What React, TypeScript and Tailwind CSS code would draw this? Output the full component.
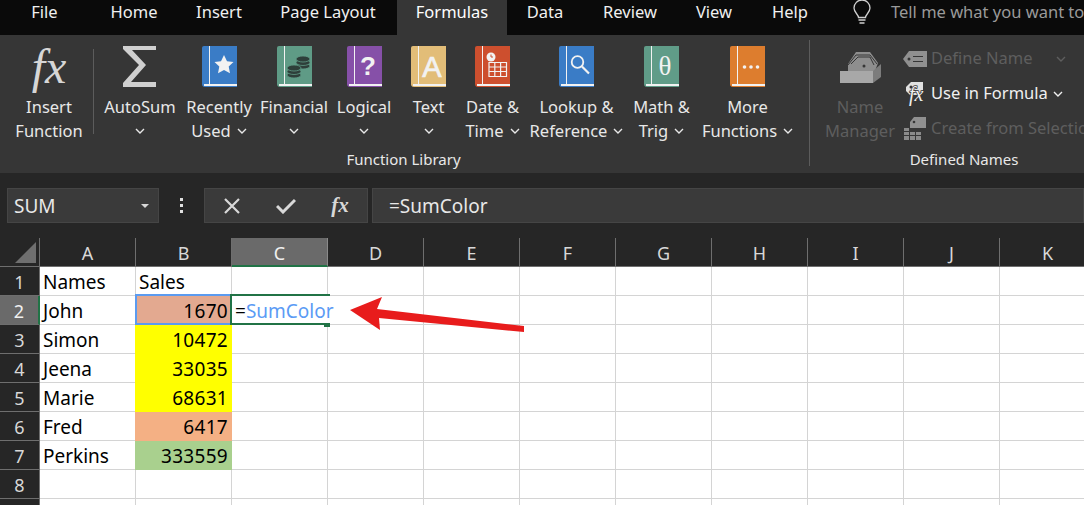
import type { ReactNode } from 'react';

const uiFont = "font-['Noto_Sans',sans-serif]";

function Chevron({ className = '' }: { className?: string }) {
  return (
    <svg width="10" height="6" viewBox="0 0 10 6" className={className}>
      <path d="M1 1l4 4 4-4" fill="none" stroke="currentColor" strokeWidth="1.4" />
    </svg>
  );
}

function Book({ color, children }: { color: string; children?: ReactNode }) {
  return (
    <svg width="35" height="41" viewBox="0 0 35 41">
      <path d="M2 0h33v41H3a3 3 0 0 1-3-3V2a2 2 0 0 1 2-2z" fill={color} />
      <rect x="7" y="0" width="1" height="38" fill="#f2f2f2" />
      <rect x="2" y="38" width="33" height="2" fill="#f2f2f2" />
      {children}
    </svg>
  );
}

function Coins() {
  const stack = (x: number, y: number) => (
    <g fill="#2e3f3a" stroke="#5f9b86" strokeWidth="0.8">
      <ellipse cx={x} cy={y + 10} rx="7" ry="3" />
      <ellipse cx={x} cy={y + 6.500} rx="7" ry="3" />
      <ellipse cx={x} cy={y + 3} rx="7" ry="3" />
    </g>
  );
  return (
    <>
      {stack(26, 10)}
      {stack(17, 19)}
    </>
  );
}

function RibbonButton({
  width,
  icon,
  line1,
  line2,
}: {
  width: string;
  icon: ReactNode;
  line1: string;
  line2?: string;
}) {
  return (
    <div className={`${width} flex flex-col items-center pt-[11px] shrink-0`}>
      <div className="h-[41px] flex items-center justify-center">{icon}</div>
      <div className="mt-[8px] text-[16.5px] leading-[24px] whitespace-nowrap">{line1}</div>
      <div className="h-[24px] flex items-center gap-[6px] text-[16.5px] leading-[24px] whitespace-nowrap">
        {line2}
        <Chevron />
      </div>
    </div>
  );
}

function TopTab({ width, label, active }: { width: string; label: string; active?: boolean }) {
  return (
    <div
      className={`${width} h-[35px] pb-[10px] shrink-0 flex items-center justify-center text-[16.5px] ${
        active ? 'bg-[#363636] text-white' : 'text-[#f0f0f0]'
      }`}
    >
      {label}
    </div>
  );
}

const columns = ['A', 'B', 'C', 'D', 'E', 'F', 'G', 'H', 'I', 'J', 'K'];

const rows: { name: string; sales: string; fill: string }[] = [
  { name: 'Names', sales: '', fill: '' },
  { name: 'John', sales: '1670', fill: 'bg-[#e3a990] border-[#e3a990]' },
  { name: 'Simon', sales: '10472', fill: 'bg-[#ffff00] border-[#ffff00]' },
  { name: 'Jeena', sales: '33035', fill: 'bg-[#ffff00] border-[#ffff00]' },
  { name: 'Marie', sales: '68631', fill: 'bg-[#ffff00] border-[#ffff00]' },
  { name: 'Fred', sales: '6417', fill: 'bg-[#f4b084] border-[#f4b084]' },
  { name: 'Perkins', sales: '333559', fill: 'bg-[#a9d08e] border-[#a9d08e]' },
  { name: '', sales: '', fill: '' },
  { name: '', sales: '', fill: '' },
];

function Sheet() {
  return (
    <div className="grid grid-cols-[40px_repeat(11,96px)] auto-rows-[29px] text-[19px] leading-[26px] text-black">
      <div className="bg-[#262626] border-r border-b border-[#6e6e6e] flex items-end justify-end pr-[3px] pb-[3px]">
        <svg width="21" height="21" viewBox="0 0 21 21">
          <path d="M21 0v21H0z" fill="#6f6f6f" />
        </svg>
      </div>
      {columns.map((c) => (
        <div
          key={c}
          className={`flex items-center justify-center pt-[2px] border-r text-[18px] text-[#d8d8d8] ${
            c === 'C'
              ? 'bg-[#6a6a6a] border-[#8a8a8a] border-b-2 border-b-[#217346] text-[#f0f0f0]'
              : 'bg-[#262626] border-b border-[#6e6e6e]'
          }`}
        >
          {c}
        </div>
      ))}
      {rows.map((r, i) => {
        const n = i + 1;
        return [
          <div
            key={`h${n}`}
            className={`flex items-center justify-center pt-[2px] border-b border-[#6e6e6e] text-[18px] ${
              n === 2
                ? 'bg-[#6a6a6a] text-[#f0f0f0] border-r-2 border-r-[#217346]'
                : 'bg-[#262626] text-[#d8d8d8] border-r'
            }`}
          >
            {n < 9 ? n : ''}
          </div>,
          ...columns.map((c) => {
            if (c === 'A') {
              return (
                <div key={c + n} className="bg-white border-r border-b border-[#d4d4d4] flex items-center pt-[2px] pl-[3px] whitespace-nowrap">
                  {r.name}
                </div>
              );
            }
            if (c === 'B') {
              return (
                <div
                  key={c + n}
                  className={`relative flex items-center pt-[2px] border-r border-b ${
                    r.fill
                      ? `${r.fill} ml-[-1px] justify-end pr-[3px] tracking-[0.3px]`
                      : 'bg-white border-[#d4d4d4] pl-[3px]'
                  }`}
                >
                  {n === 1 ? 'Sales' : r.sales}
                  {n === 2 && (
                    <div className="absolute left-0 top-[-2px] w-[97px] h-[31px] border-2 border-[#5b9bf0]" />
                  )}
                </div>
              );
            }
            if (c === 'C' && n === 2) {
              return (
                <div key={c + n} className="relative bg-white border-b border-[#d4d4d4] flex items-center pt-[2px] pl-[3px] whitespace-nowrap">
                  <span>=</span>
                  <span className="text-[#5b9bf5]">SumColor</span>
                  <div className="absolute left-[-2px] top-[-2px] w-[100px] h-[2px] bg-[#217346]" />
                  <div className="absolute left-[-2px] top-[-2px] w-[2px] h-[31px] bg-[#217346]" />
                  <div className="absolute left-[-2px] top-[27px] w-[96px] h-[2px] bg-[#217346]" />
                  <div className="absolute left-[92px] top-[27px] w-[6px] h-[4px] bg-[#217346]" />
                </div>
              );
            }
            return <div key={c + n} className="bg-white border-r border-b border-[#d4d4d4]" />;
          }),
        ];
      })}
    </div>
  );
}

export default function App() {
  return (
    <div className={`relative w-[1084px] h-[505px] overflow-hidden bg-[#262626] ${uiFont}`}>
      {/* tab strip */}
      <div className="h-[35px] bg-[#0a0a0a] flex items-center">
        <TopTab width="w-[89px]" label="File" />
        <TopTab width="w-[90px]" label="Home" />
        <TopTab width="w-[80px]" label="Insert" />
        <TopTab width="w-[138px]" label="Page Layout" />
        <TopTab width="w-[110px]" label="Formulas" active />
        <TopTab width="w-[76px]" label="Data" />
        <TopTab width="w-[94px]" label="Review" />
        <TopTab width="w-[74px]" label="View" />
        <TopTab width="w-[78px]" label="Help" />
        <svg width="18" height="25" viewBox="0 0 18 25" className="ml-[24px] mb-[10px] shrink-0">
          <path
            d="M5.500 17.500c0-3-4.500-5-4.500-9.500a8 8 0 0 1 16 0c0 4.500-4.500 6.500-4.500 9.500z"
            fill="none"
            stroke="#d0d0d0"
            strokeWidth="1.300"
          />
          <path d="M5.500 20h7M6.500 23h5" stroke="#d0d0d0" strokeWidth="1.500" />
        </svg>
        <div className="ml-[20px] mb-[10px] text-[16.5px] text-[#9a9a9a] whitespace-nowrap shrink-0">
          Tell me what you want to do
        </div>
      </div>

      {/* ribbon */}
      <div className="h-[138px] bg-[#363636] flex text-[#e8e8e8]">
        <div className="w-[809px] shrink-0 flex flex-col">
          <div className="flex h-[112px] pl-[5px]">
            <div className="w-[88px] shrink-0 flex flex-col items-center pt-[11px]">
              <div className="h-[41px] flex items-center justify-center font-['Liberation_Serif',serif] italic text-[48px] leading-none text-[#d6d6d6]">
                fx
              </div>
              <div className="mt-[8px] text-[16.5px] leading-[24px]">Insert</div>
              <div className="text-[16.5px] leading-[24px]">Function</div>
            </div>
            <div className="w-px h-[85px] mt-[14px] bg-[#5c5c5c] shrink-0" />
            <div className="w-[6px] shrink-0" />
            <RibbonButton
              width="w-[80px]"
              line1="AutoSum"
              icon={
                <svg width="34" height="41" viewBox="0 0 34 41">
                  <path d="M0 0h33v4H9l14 15L8 36h25v5H0v-4l16-18L0 3z" fill="#d0d0d0" />
                </svg>
              }
            />
            <RibbonButton
              width="w-[78px]"
              line1="Recently"
              line2="Used"
              icon={
                <Book color="#3a7cc6">
                  <path d="M22 9l3 6.300 6.500.8-4.800 4.500 1.300 6.700-6-3.300-6 3.300 1.300-6.700-4.800-4.500 6.500-.8z" fill="#f2f2f2" />
                </Book>
              }
            />
            <RibbonButton
              width="w-[72px]"
              line1="Financial"
              icon={
                <Book color="#5f9b86">
                  <Coins />
                </Book>
              }
            />
            <RibbonButton
              width="w-[68px]"
              line1="Logical"
              icon={
                <Book color="#8650a8">
                  <text x="21" y="29" textAnchor="middle" fontSize="26" fontWeight="700" fill="#f2f2f2" fontFamily="Liberation Sans">
                    ?
                  </text>
                </Book>
              }
            />
            <RibbonButton
              width="w-[61px]"
              line1="Text"
              icon={
                <Book color="#e2bd78">
                  <text x="21" y="31" textAnchor="middle" fontSize="29" fill="#f2f2f2" stroke="#f2f2f2" strokeWidth="0.700" fontFamily="Liberation Sans">
                    A
                  </text>
                </Book>
              }
            />
            <RibbonButton
              width="w-[67px]"
              line1="Date &"
              line2="Time"
              icon={
                <Book color="#cd4f2e">
                  <circle cx="16" cy="11" r="4.500" fill="#f2f2f2" />
                  <path d="M16 8.500V11h2" stroke="#cd4f2e" strokeWidth="1" fill="none" />
                  <path d="M14 16.500h17.500v14H14zM14 21h17.500M14 25.500h17.500M19.800 16.500v14M25.600 16.500v14" stroke="#f2f2f2" strokeWidth="1.200" fill="none" />
                </Book>
              }
            />
            <RibbonButton
              width="w-[101px]"
              line1="Lookup &"
              line2="Reference"
              icon={
                <Book color="#3a7cc6">
                  <circle cx="18.500" cy="16" r="5.800" fill="none" stroke="#f2f2f2" strokeWidth="1.800" />
                  <path d="M23 20.500l7 7" stroke="#f2f2f2" strokeWidth="2.200" />
                </Book>
              }
            />
            <RibbonButton
              width="w-[69px]"
              line1="Math &"
              line2="Trig"
              icon={
                <Book color="#609c88">
                  <text x="21" y="29" textAnchor="middle" fontSize="27" fill="#f2f2f2" fontFamily="Liberation Serif">
                    θ
                  </text>
                </Book>
              }
            />
            <RibbonButton
              width="w-[103px]"
              line1="More"
              line2="Functions"
              icon={
                <Book color="#dd7d2e">
                  <circle cx="14.500" cy="21" r="1.800" fill="#f2f2f2" />
                  <circle cx="21" cy="21" r="1.800" fill="#f2f2f2" />
                  <circle cx="27.500" cy="21" r="1.800" fill="#f2f2f2" />
                </Book>
              }
            />
          </div>
          <div className="h-[24px] flex items-center justify-center pr-[2px] text-[15px] whitespace-nowrap">Function Library</div>
        </div>

        <div className="w-px h-[126px] mt-[5px] bg-[#5c5c5c] shrink-0" />

        <div className="flex-1 flex flex-col">
          <div className="flex h-[112px]">
            <div className="w-[92px] shrink-0 flex flex-col items-center pt-[11px] pl-[8px] text-[#5e5e5e]">
              <div className="h-[41px] flex items-center justify-center">
                <svg width="42" height="34" viewBox="0 0 42 34">
                  <path d="M9 21v-7L17 2h14l8 11-3 8z" fill="#8e8e8e" />
                  <path d="M9 15l8-10h14l7 9M12 14l7-7h12l4 8" fill="none" stroke="#363636" strokeWidth="1" />
                  <path d="M1 21h33v12H1z" fill="#a8a8a8" />
                  <path d="M34 21l8-7v13l-8 6z" fill="#7c7c7c" />
                  <circle cx="25" cy="16" r="1.500" fill="#363636" />
                </svg>
              </div>
              <div className="mt-[8px] text-[16.5px] leading-[24px]">Name</div>
              <div className="text-[16.5px] leading-[24px]">Manager</div>
            </div>
            <div className="flex flex-col pt-[6px] text-[16.5px] whitespace-nowrap">
              <div className="h-[35px] flex items-center gap-[5px] text-[#5e5e5e]">
                <svg width="24" height="16" viewBox="0 0 24 16" className="ml-[1px] mr-[-1px]">
                  <path d="M6 0h18v16H6L0 8z" fill="#909090" />
                  <circle cx="6" cy="8" r="1.500" fill="#363636" />
                  <path d="M10 5.500h10M10 10.500h10" stroke="#363636" strokeWidth="1.200" />
                </svg>
                <span>Define Name</span>
                <Chevron className="ml-[18px] text-[#5e5e5e]" />
              </div>
              <div className="h-[35px] flex items-center gap-[5px] text-[#f0f0f0]">
                <svg width="24" height="24" viewBox="0 0 24 24" className="shrink-0">
                  <path d="M4 5l5-5h12v8l-5 5H8L4 9z" fill="#e0e0e0" />
                  <circle cx="9" cy="5" r="1.500" fill="#363636" />
                  <text
                    x="7"
                    y="19"
                    fontSize="20"
                    fontStyle="italic"
                    fontFamily="Liberation Serif"
                    fill="#f0f0f0"
                    stroke="#363636"
                    strokeWidth="1.500"
                    paintOrder="stroke"
                  >
                    fx
                  </text>
                </svg>
                <span>Use in Formula</span>
                <Chevron />
              </div>
              <div className="h-[35px] flex items-center gap-[5px] text-[#5e5e5e]">
                <svg width="24" height="23" viewBox="0 0 24 23">
                  <path d="M8 5l4-5h12v11H8z" fill="#909090" />
                  <circle cx="12" cy="5" r="1.300" fill="#363636" />
                  <path d="M2 11h5v3H2zM2 15h5v3H2zM2 19h5v4H2zM8 15h5v3H8zM8 19h5v4H8zM14 15h5v3h-5zM14 19h5v4h-5z" fill="#8a8a8a" />
                </svg>
                <span>Create from Selection</span>
              </div>
            </div>
          </div>
          <div className="h-[24px] flex items-center justify-center text-[15px] pl-[20px] whitespace-nowrap">
            Defined Names
          </div>
        </div>
      </div>

      {/* formula bar */}
      <div className="h-[65px] flex items-start pt-[15px] pl-[7px] text-[#e8e8e8]">
        <div className="w-[152px] h-[35px] bg-[#3a3a3a] border border-[#454545] flex items-center justify-between pl-[6px] pr-[9px] text-[19px]">
          <span className="pt-[2px]">SUM</span>
          <svg width="8" height="4" viewBox="0 0 8 4">
            <path d="M0 0h8L4 4z" fill="#d8d8d8" />
          </svg>
        </div>
        <div className="w-[45px] h-[35px] flex flex-col items-center justify-center gap-[3px]">
          <div className="w-[3px] h-[3px] bg-[#e0e0e0]" />
          <div className="w-[3px] h-[3px] bg-[#e0e0e0]" />
          <div className="w-[3px] h-[3px] bg-[#e0e0e0]" />
        </div>
        <div className="w-[164px] h-[35px] bg-[#3a3a3a] border border-[#454545] flex items-center">
          <div className="w-[54px] flex justify-center">
            <svg width="18" height="16" viewBox="0 0 18 16">
              <path d="M2 1l14 14M16 1L2 15" stroke="#d8d8d8" strokeWidth="2.200" />
            </svg>
          </div>
          <div className="w-[54px] flex justify-center">
            <svg width="20" height="16" viewBox="0 0 20 16">
              <path d="M1 8l6 6L19 2" stroke="#d8d8d8" strokeWidth="3" fill="none" />
            </svg>
          </div>
          <div className="w-[54px] flex justify-center font-['Liberation_Serif',serif] italic font-bold text-[21px] text-[#d8d8d8]">
            fx
          </div>
        </div>
        <div className="ml-[4px] flex-1 h-[35px] bg-[#3a3a3a] border border-[#454545] flex items-center pt-[2px] pl-[16px] text-[19px]">
          =SumColor
        </div>
      </div>

      <Sheet />

      {/* annotation arrow */}
      <svg width="175" height="40" viewBox="0 0 175 40" className="absolute left-[350px] top-[295px]">
        <path d="M0 15L32 2l-5 12 147 17v6L29 23l1 12z" fill="#e81c1c" />
      </svg>
    </div>
  );
}
